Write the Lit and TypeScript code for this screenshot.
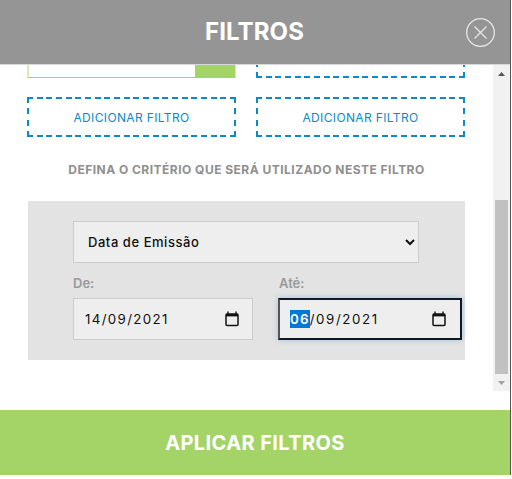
import { LitElement, html, css } from "lit";
import { customElement } from "lit/decorators.js";

const cal = html`<svg class="cal" width="14" height="16" viewBox="0 0 14 16"><path d="M3 .5v2.5M11 .5v2.5" stroke="#111" stroke-width="1.4" fill="none"/><rect x="1" y="3" width="12" height="11.4" rx="1" fill="none" stroke="#111" stroke-width="1.5"/><rect x="1" y="3" width="12" height="2.4" fill="#111"/></svg>`;

@customElement("app-root")
export class AppRoot extends LitElement {
  static styles = css`
    :host { display: block; width: 512px; height: 479px; background: #fff; font-family: Inter, "Noto Sans", sans-serif; overflow: hidden; --c: #0a8acb; }
    * { box-sizing: border-box; }
    .page { display: flex; height: 479px; }
    .edge { width: 1px; height: 475px; flex: none; background: #555; }
    .modal { width: 510px; height: 475px; flex: none; display: flex; flex-direction: column; background: #fff; }
    .head { height: 65px; flex: none; background: #959595; border-bottom: 1px solid #d8d8d8; display: flex; align-items: center; justify-content: center; position: relative; padding-bottom: 2px; }
    .head h1 { margin: 0 0 0 -1px; font-size: 24px; font-weight: 700; color: #fff; letter-spacing: 0.1px; }
    .close { position: absolute; left: 466px; top: 18px; width: 29px; height: 29px; }
    .mid { flex: 1; display: flex; min-height: 0; }
    .content { width: 493px; flex: none; padding-left: 27px; display: flex; flex-direction: column; }
    .row { display: flex; gap: 20px; }
    .cut { height: 13px; }
    .cutbox { width: 209px; height: 13px; display: flex; border-left: 2px solid #d6ebb8; border-bottom: 1px solid #a4d467; border-right: 1px solid #d6ebb8; }
    .cutbox i { flex: 1; background: #fff; }
    .cutbox b { width: 40px; background: #a4d467; }
    .cutdash {
      width: 209px; height: 13px;
      background:
        repeating-linear-gradient(90deg, var(--c) 0 6px, transparent 6px 9.667px) 0 100% / 100% 2px no-repeat,
        repeating-linear-gradient(0deg, var(--c) 0 6px, transparent 6px 11.333px) 0 0 / 2px 100% no-repeat,
        repeating-linear-gradient(0deg, var(--c) 0 6px, transparent 6px 11.333px) 100% 0 / 2px 100% no-repeat;
    }
    .add { margin-top: 19px; }
    .dash {
      width: 209px; height: 40px; color: #0a8acb; font-size: 12px; font-weight: 400; letter-spacing: 0.36px;
      display: flex; align-items: center; justify-content: center;
      background:
        repeating-linear-gradient(90deg, var(--c) 0 6px, transparent 6px 9.667px) 0 0 / 100% 2px no-repeat,
        repeating-linear-gradient(90deg, var(--c) 0 6px, transparent 6px 9.667px) 0 100% / 100% 2px no-repeat,
        repeating-linear-gradient(180deg, var(--c) 0 6px, transparent 6px 11.333px) 0 0 / 2px 100% no-repeat,
        repeating-linear-gradient(180deg, var(--c) 0 6px, transparent 6px 11.333px) 100% 0 / 2px 100% no-repeat;
    }
    .desc { margin: 25px 0 0 -27px; width: 493px; text-align: center; font-size: 12px; font-weight: 700; line-height: 16px; color: #8f8f8f; letter-spacing: 0.48px; }
    .panel { margin: 23px 0 0 1px; width: 437px; height: 159px; background: #e3e3e3; padding: 20px 46px 0 45px; }
    select { display: block; width: 346px; height: 42px; background: #eeeeee; border: 1px solid #cccccc; border-radius: 0; padding: 0 10px; font: 500 13px Inter, sans-serif; letter-spacing: 0.55px; color: #111; outline: none; }
    .dates { display: flex; gap: 25px; margin-top: 13px; }
    .f label { display: block; font-size: 13px; font-weight: 600; line-height: 15px; color: #999; height: 15px; margin-bottom: 7px; }
    .b label { padding-left: 1px; }
    .date { height: 42px; background: #eee; border: 1px solid #ccc; display: flex; align-items: center; justify-content: space-between; font-size: 13.3px; letter-spacing: 1.35px; color: #111; }
    .a .date { width: 180px; padding: 0 13px 0 11px; }
    .b .date { width: 184px; padding: 0 14px 0 10px; letter-spacing: 1.6px; border: 2px solid #101828; border-left-color: #555; box-shadow: 0 0 6px rgba(90,150,210,.45); }
    .sel { background: #0078d7; color: #fff; font-weight: 600; letter-spacing: 1.2px; display: inline-block; line-height: 18px; }
    .sb { width: 17px; flex: none; background: #f1f1f1; display: flex; flex-direction: column; align-items: center; height: 326px; }
    .arrow { height: 17px; width: 17px; display: flex; align-items: center; justify-content: center; flex: none; }
    .track { flex: 1; width: 13px; padding-top: 118px; display: flex; }
    .thumb { flex: 1; background: #c1c1c1; }
    .foot { height: 65px; flex: none; background: #a4d467; display: flex; align-items: center; justify-content: center; color: #fff; font-size: 20px; font-weight: 700; letter-spacing: 0.4px; }
  `;

  render() {
    return html`<div class="page"><div class="modal">
      <div class="head">
        <h1>FILTROS</h1>
        <svg class="close" viewBox="0 0 29 29"><circle cx="14.5" cy="14.5" r="13.8" fill="none" stroke="#e6e6e6" stroke-width="1.3"/><path d="M8.5 8.5l12 12M20.5 8.5l-12 12" stroke="#e6e6e6" stroke-width="1.3" fill="none"/></svg>
      </div>
      <div class="mid">
        <div class="content">
          <div class="row cut"><div class="cutbox"><i></i><b></b></div><div class="cutdash"></div></div>
          <div class="row add"><div class="dash">ADICIONAR FILTRO</div><div class="dash">ADICIONAR FILTRO</div></div>
          <div class="desc">DEFINA O CRITÉRIO QUE SERÁ UTILIZADO NESTE FILTRO</div>
          <div class="panel">
            <select><option>Data de Emissão</option></select>
            <div class="dates">
              <div class="f a"><label>De:</label><div class="date"><span>14/09/2021</span>${cal}</div></div>
              <div class="f b"><label>Até:</label><div class="date"><span><span class="sel">06</span>/09/2021</span>${cal}</div></div>
            </div>
          </div>
        </div>
        <div class="sb">
          <div class="arrow"><svg width="7" height="4" viewBox="0 0 7 4"><path d="M3.5 0L7 4H0z" fill="#555"/></svg></div>
          <div class="track"><div class="thumb"></div></div>
          <div class="arrow"><svg width="7" height="4" viewBox="0 0 7 4"><path d="M0 0h7L3.5 4z" fill="#a3a3a3"/></svg></div>
        </div>
      </div>
      <div class="foot">APLICAR FILTROS</div>
    </div><div class="edge"></div></div>`;
  }
}
